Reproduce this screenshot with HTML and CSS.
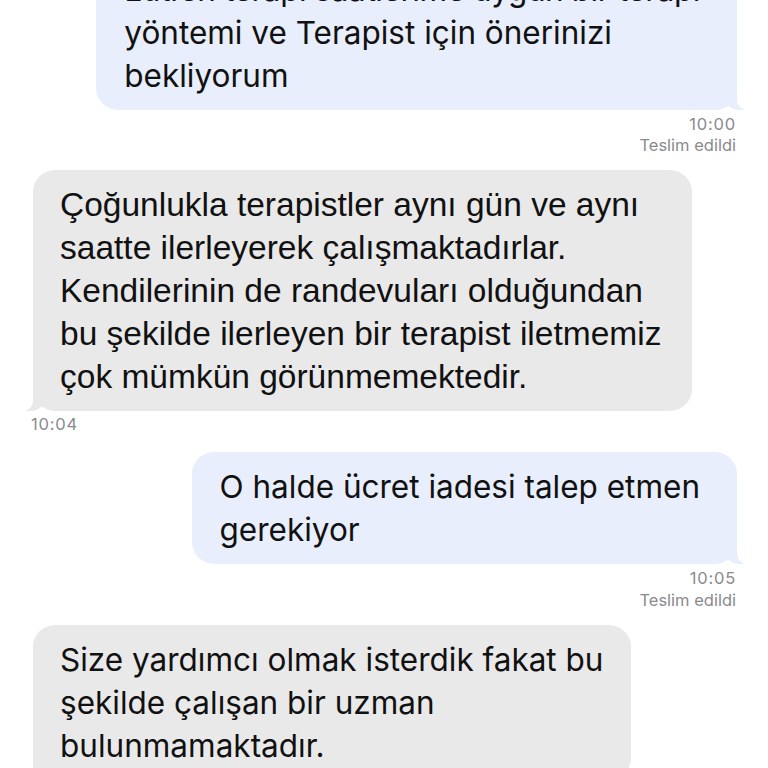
FILE: index.html
```html
<!DOCTYPE html>
<html lang="tr">
<head>
<meta charset="utf-8">
<link rel="stylesheet" href="styles.css">
</head>
<body>
<div class="chat">
  <div class="bubble out first"><span class="tight">Lütfen terapi saatlerime uygun bir terapi</span><br>yöntemi ve Terapist için önerinizi<br>bekliyorum</div>
  <div class="meta out-meta"><span class="time">10:00</span><span>Teslim edildi</span></div>

  <div class="bubble in helv">Çoğunlukla terapistler aynı gün ve aynı<br>saatte ilerleyerek çalışmaktadırlar.<br>Kendilerinin de randevuları olduğundan<br>bu şekilde ilerleyen bir terapist iletmemiz<br>çok mümkün görünmemektedir.</div>
  <div class="meta in-meta"><span class="time">10:04</span></div>

  <div class="bubble out second">O halde ücret iadesi talep etmen<br>gerekiyor</div>
  <div class="meta out-meta second-meta"><span class="time">10:05</span><span>Teslim edildi</span></div>

  <div class="bubble in last">Size yardımcı olmak isterdik fakat bu<br>şekilde çalışan bir uzman<br>bulunmamaktadır.</div>
</div>
</body>
</html>
```

FILE: styles.css
```css
html, body {
  margin: 0;
  padding: 0;
  background: #ffffff;
  overflow: hidden;
}

.chat {
  display: flex;
  flex-direction: column;
  margin-top: -45px;
  padding: 0 31px 0 33px;
  font-family: Inter, "Noto Sans", sans-serif;
  color: #111111;
}

.bubble {
  position: relative;
  font-size: 31.5px;
  line-height: 43px;
  padding: 13px 28px 13px 28px;
  border-radius: 22px;
  white-space: nowrap;
}

.bubble.out {
  align-self: flex-end;
  background: #e8eefb;
  padding-right: 37px;
}

.bubble .tight {
  letter-spacing: -0.42px;
}

.bubble.second {
  padding-top: 13px;
  padding-bottom: 13px;
}

.bubble.in {
  align-self: flex-start;
  background: #e9e9ea;
  padding-left: 27px;
}

.bubble.helv {
  font-family: "Liberation Sans", Arial, sans-serif;
  font-size: 33.5px;
  padding-right: 31px;
}

.bubble.out::before {
  content: "";
  position: absolute;
  bottom: 0;
  right: -7px;
  width: 20px;
  height: 22px;
  background: #e8eefb;
  border-bottom-left-radius: 16px 14px;
}

.bubble.out::after {
  content: "";
  position: absolute;
  bottom: 0;
  right: -12px;
  width: 12px;
  height: 22px;
  background: #ffffff;
  border-bottom-left-radius: 10px;
}

.bubble.in::before {
  content: "";
  position: absolute;
  bottom: 0;
  left: -7px;
  width: 20px;
  height: 22px;
  background: #e9e9ea;
  border-bottom-right-radius: 16px 14px;
}

.bubble.in::after {
  content: "";
  position: absolute;
  bottom: 0;
  left: -12px;
  width: 12px;
  height: 22px;
  background: #ffffff;
  border-bottom-right-radius: 10px;
}

.meta {
  display: flex;
  flex-direction: column;
  font-size: 16.5px;
  line-height: 21px;
  color: #8a8a8e;
}

.meta .time {
  letter-spacing: 0.8px;
}

.out-meta {
  align-items: flex-end;
  padding-right: 1px;
  margin: 4px 0 14px;
}

.second-meta {
  line-height: 21.5px;
  margin: 4px 0 14px;
}

.in-meta {
  align-items: flex-start;
  margin: 3px 0 17px -2px;
}
```
